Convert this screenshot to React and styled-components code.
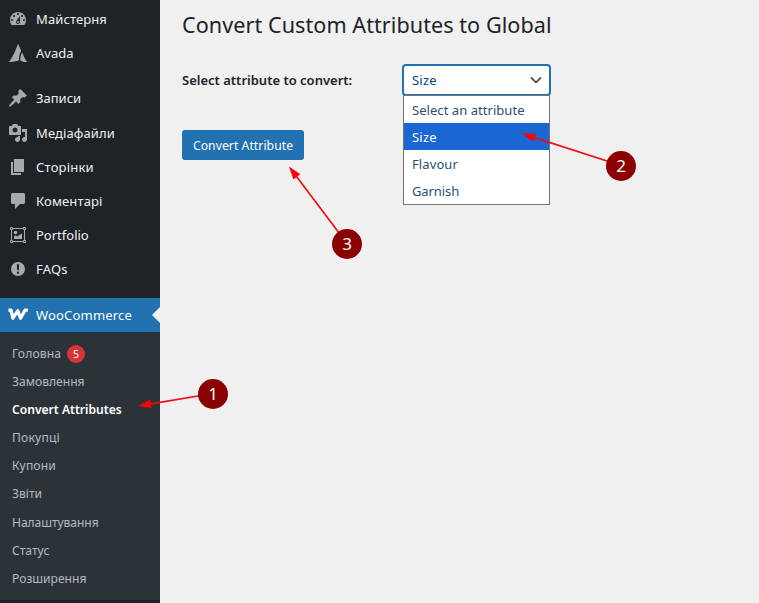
import React from "react";
import styled, { createGlobalStyle, css } from "styled-components";

const GlobalStyle = createGlobalStyle`
  * { box-sizing: border-box; }
  html, body { margin: 0; padding: 0; background: #f0f0f1; overflow: hidden; }
  body { font-family: "Noto Sans", "Open Sans", sans-serif; }
`;

const Screen = styled.div`
  position: relative;
  display: flex;
  width: 759px;
  height: 603px;
  overflow: hidden;
  background: #f0f0f1;
`;

const Sidebar = styled.nav`
  flex: 0 0 160px;
  height: 603px;
  padding-top: 2px;
  background: #1d2327;
`;

const MenuGroup = styled.ul`
  list-style: none;
  margin: 0 0 11px;
  padding: 0;
`;

const MenuItem = styled.li`
  display: flex;
  align-items: center;
  gap: 8px;
  height: 34.2px;
  padding-left: 8px;
  color: ${(p) => (p.$active ? "#fff" : "#f0f0f1")};
  background: ${(p) => (p.$active ? "#2271b1" : "transparent")};
`;

const MenuLabel = styled.span`
  flex: 1;
  font-size: 13px;
  line-height: 18px;
  white-space: nowrap;
  letter-spacing: ${(p) => p.$track || 0}px;
`;

const MenuIcon = styled.svg`
  flex: none;
  width: 20px;
  height: 20px;
  color: ${(p) => (p.$active ? "#fff" : "#a7aaad")};
  fill: currentColor;
`;

const ActiveNotch = styled.span`
  border: 8px solid transparent;
  border-left-width: 0;
  border-right-color: #f0f0f1;
`;

const Submenu = styled.ul`
  list-style: none;
  margin: 0;
  padding: 8px 0 7px;
  background: #2c3338;
`;

const SubmenuItem = styled.li`
  display: flex;
  align-items: center;
  gap: 6px;
  height: 28.15px;
  padding-left: 12px;
  font-size: 12.1px;
  line-height: 18px;
  white-space: nowrap;
  color: rgba(240, 246, 252, 0.7);
  letter-spacing: ${(p) => p.$track || 0}px;
  ${(p) => p.$current && css`
    color: #fff;
    font-weight: 600;
  `}
`;

const CountBadge = styled.span`
  width: 18px;
  height: 18px;
  border-radius: 9px;
  background: #d63638;
  color: #fff;
  font-size: 10.5px;
  line-height: 18px;
  text-align: center;
`;

const Content = styled.main`
  flex: 1;
  padding: 10px 0 0 22px;
`;

const Title = styled.h1`
  margin: 0;
  font-size: 21.6px;
  font-weight: 400;
  line-height: 30px;
  color: #1d2327;
  white-space: nowrap;
  letter-spacing: 0.05px;
`;

const Field = styled.div`
  display: flex;
  align-items: flex-start;
  margin-top: 24px;
`;

const FieldLabel = styled.label`
  width: 220px;
  font-size: 13px;
  font-weight: 600;
  line-height: 32px;
  color: #1d2327;
`;

const SelectWrap = styled.div`
  position: relative;
  width: 149px;
`;

const SelectBox = styled.div`
  display: flex;
  align-items: center;
  justify-content: space-between;
  height: 32px;
  padding: 0 7px 0 8px;
  border: 2px solid #2271b1;
  border-radius: 4px;
  background: #fff;
  color: #0a4b78;
  font-size: 13px;
  letter-spacing: 0.2px;
`;

const Chevron = styled.svg`
  width: 12px;
  height: 8px;
  fill: none;
  stroke: #50575e;
  stroke-width: 1.8;
`;

const OptionList = styled.ul`
  position: absolute;
  top: 31px;
  left: 1px;
  width: 147px;
  margin: 0;
  padding: 0;
  list-style: none;
  border: 1px solid #767676;
  background: #fff;
`;

const Option = styled.li`
  height: 27px;
  padding-left: 8px;
  font-size: 13px;
  line-height: 28px;
  letter-spacing: ${(p) => p.$track || 0}px;
  color: ${(p) => (p.$selected ? "#fff" : "#2c4f73")};
  background: ${(p) => (p.$selected ? "#1967d2" : "#fff")};
`;

const PrimaryButton = styled.button`
  display: block;
  width: 122px;
  height: 30px;
  margin-top: 34px;
  padding: 1px 0 0;
  border: 0;
  border-radius: 3px;
  background: #2271b1;
  color: #fff;
  font-family: inherit;
  font-size: 12.2px;
  line-height: 29px;
  white-space: nowrap;
  letter-spacing: 0.05px;
`;

const ArrowLayer = styled.svg`
  position: absolute;
  inset: 0;
  pointer-events: none;
  fill: red;
  stroke: #f00c14;
  stroke-width: 1.7;
`;

const StepMarker = styled.span`
  position: absolute;
  left: ${(p) => p.$x - 15}px;
  top: ${(p) => p.$y - 15}px;
  width: 30px;
  height: 30px;
  border-radius: 50%;
  background: #8b0000;
  color: #fff;
  font-size: 17px;
  line-height: 29px;
  text-align: center;
`;

const icons = {
  dashboard: (
    <path fillRule="evenodd" d="M3.76 16h12.48c1.1-1.37 1.76-3.11 1.76-5 0-4.42-3.58-8-8-8s-8 3.58-8 8c0 1.89.66 3.63 1.76 5zM10 4c.55 0 1 .45 1 1s-.45 1-1 1-1-.45-1-1 .45-1 1-1zM6 6c.55 0 1 .45 1 1s-.45 1-1 1-1-.45-1-1 .45-1 1-1zm8 0c.55 0 1 .45 1 1s-.45 1-1 1-1-.45-1-1 .45-1 1-1zm-5.37 5.55L12 7v6c0 1.1-.9 2-2 2s-2-.9-2-2c0-.57.24-1.08.63-1.45zM4 10c.55 0 1 .45 1 1s-.45 1-1 1-1-.45-1-1 .45-1 1-1zm12 0c.55 0 1 .45 1 1s-.45 1-1 1-1-.45-1-1 .45-1 1-1zm-5 3c0-.55-.45-1-1-1s-1 .45-1 1 .45 1 1 1 1-.45 1-1z" />
  ),
  avada: (
    <path d="M10 .8C11 3 12.3 5.6 13.2 8 11.4 10.8 10.8 14.5 11 17.3 8 18.8 4 19 .8 18.9 4.5 15 7.8 7 10 .8ZM14.3 9.5C15.3 12.5 17.2 16.6 19.2 18.9 17 19.1 14.5 18.9 12.5 17.7 11.9 14.8 12.7 11.7 14.3 9.5Z" />
  ),
  pin: (
    <path stroke="currentColor" strokeWidth=".5" d="M10.44 3.02l1.82-1.82 6.36 6.35-1.83 1.82c-1.05-.68-2.48-.57-3.41.36l-.75.75c-.92.93-1.04 2.35-.35 3.41l-1.83 1.82-2.41-2.41-2.8 2.79c-.42.42-3.38 2.71-3.8 2.29s1.86-3.39 2.28-3.81l2.79-2.79L4.1 9.36l1.83-1.82c1.05.69 2.48.57 3.4-.36l.75-.75c.93-.92 1.05-2.35.36-3.41z" />
  ),
  media: (
    <path fillRule="evenodd" d="M13 11V4c0-.55-.45-1-1-1h-1.67L9 1H5L3.67 3H2c-.55 0-1 .45-1 1v7c0 .55.45 1 1 1h10c.55 0 1-.45 1-1zM7 4.5c1.38 0 2.5 1.12 2.5 2.5S8.38 9.5 7 9.5 4.5 8.38 4.5 7 5.62 4.5 7 4.5zM14 6h5v10.5c0 1.38-1.12 2.5-2.5 2.5S14 17.88 14 16.5s1.12-2.5 2.5-2.5c.17 0 .34.02.5.05V9h-3V6zm-4 8.05V13h2v3.5c0 1.38-1.12 2.5-2.5 2.5S7 17.88 7 16.5 8.12 14 9.5 14c.17 0 .34.02.5.05z" />
  ),
  page: <path d="M6 15V2h10v13H6zm-1 1h8v2H3V5h2v11z" />,
  comment: (
    <path d="M4.5 2h11c.8 0 1.5.7 1.5 1.5v8c0 .8-.7 1.5-1.5 1.5H12l-5 5v-5H4.5C3.7 13 3 12.3 3 11.5v-8C3 2.7 3.7 2 4.5 2z" />
  ),
  portfolio: (
    <g>
      <path d="M3.5 3.5h13v13h-13z" fill="none" stroke="currentColor" />
      <g fill="#1d2327" stroke="currentColor">
        <path d="M2.5 2.5h2v2h-2zM15.5 2.5h2v2h-2zM2.5 15.5h2v2h-2zM15.5 15.5h2v2h-2z" />
      </g>
      <circle cx="7.5" cy="7.5" r="1.8" />
      <path d="M6 14v-3l2-.6 2 1.4 1-2 1 .2 2-1.8V14z" />
    </g>
  ),
  warning: (
    <path fillRule="evenodd" d="M10 3a7 7 0 1 1 0 14a7 7 0 0 1 0-14zM8.8 5.3l.4 5.9h1.6l.4-5.9zM10 12.4a1.2 1.2 0 1 0 0 2.4a1.2 1.2 0 0 0 0-2.4z" />
  ),
  woo: (
    <path
      d="M.4 5.2H3L4.9 13.2 9.8 5.8 12.5 13.2 17 5.2H19.8"
      fill="none"
      stroke="currentColor"
      strokeWidth="3.3"
      strokeLinejoin="round"
    />
  ),
};

function SidebarEntry({ icon, label, track, active }) {
  return (
    <MenuItem $active={active}>
      <MenuIcon viewBox="0 0 20 20" $active={active}>{icons[icon]}</MenuIcon>
      <MenuLabel $track={track}>{label}</MenuLabel>
      {active && <ActiveNotch />}
    </MenuItem>
  );
}

const topItems = [
  { icon: "dashboard", label: "Майстерня", track: 0.1 },
  { icon: "avada", label: "Avada" },
];

const contentItems = [
  { icon: "pin", label: "Записи" },
  { icon: "media", label: "Медіафайли", track: 0.1 },
  { icon: "page", label: "Сторінки", track: 0.2 },
  { icon: "comment", label: "Коментарі", track: 0.15 },
  { icon: "portfolio", label: "Portfolio" },
  { icon: "warning", label: "FAQs", track: 0.2 },
];

const submenuItems = [
  { label: "Головна", count: 5, track: 0.15 },
  { label: "Замовлення" },
  { label: "Convert Attributes", current: true },
  { label: "Покупці", track: 0.2 },
  { label: "Купони", track: 0.15 },
  { label: "Звіти" },
  { label: "Налаштування", track: -0.08 },
  { label: "Статус" },
  { label: "Розширення" },
];

const options = [
  { label: "Select an attribute", track: 0.05 },
  { label: "Size", selected: true, track: 0.2 },
  { label: "Flavour", track: 0.1 },
  { label: "Garnish", track: -0.1 },
];

const steps = [
  { n: 1, x: 213, y: 393.5, tip: [138, 406] },
  { n: 2, x: 621, y: 165.5, tip: [522, 133.5] },
  { n: 3, x: 347, y: 243.5, tip: [289, 166.5] },
];

function Arrow({ from, tip }) {
  const angle = (Math.atan2(tip[1] - from[1], tip[0] - from[0]) * 180) / Math.PI;
  const length = Math.hypot(tip[0] - from[0], tip[1] - from[1]);
  return (
    <g transform={`translate(${from[0]} ${from[1]}) rotate(${angle})`}>
      <path d={`M0 0H${length - 10}`} />
      <path stroke="none" d={`M${length} 0l-13 -4.3v8.6z`} />
    </g>
  );
}

export default function App() {
  return (
    <Screen>
      <GlobalStyle />
      <Sidebar>
        <MenuGroup>
          {topItems.map((item) => <SidebarEntry key={item.label} {...item} />)}
        </MenuGroup>
        <MenuGroup>
          {contentItems.map((item) => <SidebarEntry key={item.label} {...item} />)}
        </MenuGroup>
        <MenuGroup>
          <SidebarEntry icon="woo" label="WooCommerce" track={0.18} active />
          <Submenu>
            {submenuItems.map((item) => (
              <SubmenuItem key={item.label} $current={item.current} $track={item.track}>
                {item.label}
                {item.count && <CountBadge>{item.count}</CountBadge>}
              </SubmenuItem>
            ))}
          </Submenu>
        </MenuGroup>
      </Sidebar>
      <Content>
        <Title>Convert Custom Attributes to Global</Title>
        <Field>
          <FieldLabel>Select attribute to convert:</FieldLabel>
          <SelectWrap>
            <SelectBox>
              Size
              <Chevron viewBox="0 0 12 8"><path d="M1 1.5l5 5 5-5" /></Chevron>
            </SelectBox>
            <OptionList>
              {options.map((o) => (
                <Option key={o.label} $selected={o.selected} $track={o.track}>{o.label}</Option>
              ))}
            </OptionList>
          </SelectWrap>
        </Field>
        <PrimaryButton>Convert Attribute</PrimaryButton>
      </Content>
      <ArrowLayer width="759" height="603">
        {steps.map((s) => <Arrow key={s.n} from={[s.x, s.y]} tip={s.tip} />)}
      </ArrowLayer>
      {steps.map((s) => <StepMarker key={s.n} $x={s.x} $y={s.y}>{s.n}</StepMarker>)}
    </Screen>
  );
}
